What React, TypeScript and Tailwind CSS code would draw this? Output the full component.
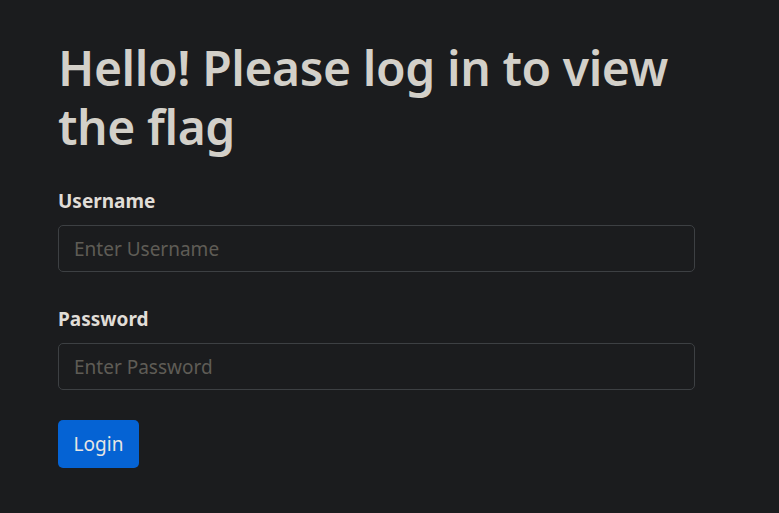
export default function App() {
  return (
    <div className="min-h-[513px] bg-[#1b1c1e] font-['Noto_Sans',sans-serif] text-[#e0ddd7]">
      <div className="w-[637px] ml-[58px] pt-[38px]">
        <h1 className="text-[48px] leading-[59px] font-semibold tracking-[-0.4px] text-[#d3d0c9] mb-[31px]">
          Hello! Please log in to view the flag
        </h1>
        <form onSubmit={(e) => e.preventDefault()}>
          <div className="mb-[33px]">
            <label className="block text-[19px] leading-[29px] font-bold mb-[9px]">Username</label>
            <input
              type="text"
              placeholder="Enter Username"
              className="block w-full h-[47px] px-[15px] text-[19px] bg-[#1b1c1e] border border-[#3d4043] rounded-[5px] placeholder:text-[#5f5c56] outline-none"
            />
          </div>
          <div className="mb-[30px]">
            <label className="block text-[19px] leading-[29px] font-bold mb-[9px]">Password</label>
            <input
              type="password"
              placeholder="Enter Password"
              className="block w-full h-[47px] px-[15px] text-[19px] bg-[#1b1c1e] border border-[#3d4043] rounded-[5px] placeholder:text-[#5f5c56] outline-none"
            />
          </div>
          <button
            type="submit"
            className="w-[81px] h-[48px] bg-[#0563d4] text-[#e8e6e3] text-[19px] rounded-[5px]"
          >
            Login
          </button>
        </form>
      </div>
    </div>
  );
}
